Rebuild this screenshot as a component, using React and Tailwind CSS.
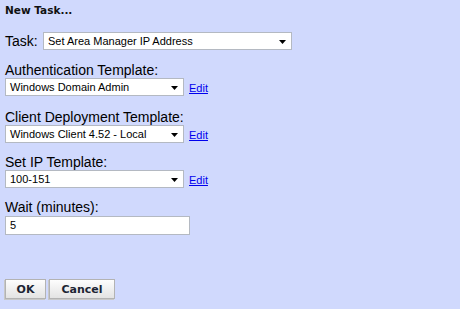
import React from "react";

function Select({ value, width }) {
  return (
    <div
      className="relative flex h-[18px] items-center border border-[#b4b9c2] bg-white pl-[4px] text-[11px] leading-none text-black"
      style={{ width }}
    >
      <span className="whitespace-nowrap">{value}</span>
      <svg
        className="absolute right-[5px] top-[7px]"
        width="7"
        height="4"
        viewBox="0 0 7 4"
      >
        <polygon points="0,0 7,0 3.5,4" fill="#000" />
      </svg>
    </div>
  );
}

function Field({ label, value, mt }) {
  return (
    <div className={mt}>
      <div className="text-[14px] leading-[15px] text-black">{label}</div>
      <div className="flex items-center">
        <Select value={value} width="179px" />
        <a
          href="#"
          className="ml-[5px] mt-[2px] text-[11px] leading-none text-[#0000ee] underline"
        >
          Edit
        </a>
      </div>
    </div>
  );
}

export default function App() {
  return (
    <div
      className="h-[309px] w-[460px] bg-[#d0d9fd] pl-[5px] pt-[4px]"
      style={{ fontFamily: '"Liberation Sans", Arial, sans-serif' }}
    >
      <div
        className="text-[11px] font-bold leading-[13px] text-[#111]"
        style={{ fontFamily: '"DejaVu Sans", Verdana, sans-serif', fontSize: "10.5px" }}
      >
        New Task...
      </div>
      <div className="mt-[15px] flex items-center">
        <span className="w-[38px] text-[14px] leading-[15px] text-black">Task:</span>
        <div className="relative flex h-[18px] w-[249px] items-center border border-[#b4b9c2] bg-white pl-[4px] text-[11px] leading-none text-black">
          <span className="whitespace-nowrap">Set Area Manager IP Address</span>
          <svg
            className="absolute right-[5px] top-[7px]"
            width="7"
            height="4"
            viewBox="0 0 7 4"
          >
            <polygon points="0,0 7,0 3.5,4" fill="#000" />
          </svg>
        </div>
      </div>
      <Field mt="mt-[13px]" label="Authentication Template:" value="Windows Domain Admin" />
      <Field mt="mt-[14px]" label="Client Deployment Template:" value="Windows Client 4.52 - Local" />
      <Field mt="mt-[12px]" label="Set IP Template:" value="100-151" />
      <div className="mt-[12px]">
        <div className="text-[14px] leading-[15px] text-black">Wait (minutes):</div>
        <div className="mt-[1px] flex h-[19px] w-[185px] items-center border border-[#b4b9c2] bg-white pl-[4px] text-[11px] leading-none text-black">
          5
        </div>
      </div>
      <div
        className="mt-[44px] flex gap-[3px]"
        style={{ fontFamily: '"DejaVu Sans", Verdana, sans-serif' }}
      >
        <button className="h-[20px] w-[41px] border border-[#b3b3b3] bg-gradient-to-b from-[#fdfdfd] to-[#e3e3e3] text-[11px] font-bold leading-none text-[#1c2433] shadow-[-1px_1px_0_#c8c8c8]">
          OK
        </button>
        <button className="h-[20px] w-[66px] border border-[#b3b3b3] bg-gradient-to-b from-[#fdfdfd] to-[#e3e3e3] text-[11px] font-bold leading-none text-[#1c2433] shadow-[-1px_1px_0_#c8c8c8]">
          Cancel
        </button>
      </div>
    </div>
  );
}
